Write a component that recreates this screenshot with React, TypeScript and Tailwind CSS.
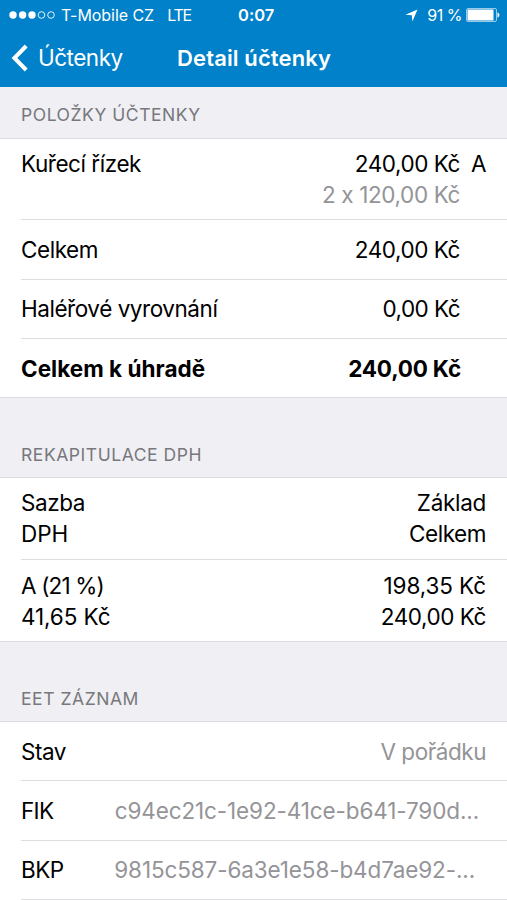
import type { ReactNode } from 'react';

function StatusBar() {
  return (
    <div className="flex h-[30px] items-center text-[16px]">
      <div className="flex w-[238px] items-center pl-[9px]">
        <svg width="46" height="10" viewBox="0 0 46 10" fill="#fff" aria-hidden="true">
          <circle cx="4" cy="5" r="3.7" />
          <circle cx="13.6" cy="5" r="3.7" />
          <circle cx="23" cy="5" r="3.7" />
          <circle cx="32.5" cy="5" r="3.3" fill="none" stroke="#fff" strokeWidth="0.9" />
          <circle cx="42" cy="5" r="3.3" fill="none" stroke="#fff" strokeWidth="0.9" />
        </svg>
        <span className="ml-[6px] tracking-[-0.05px]">T-Mobile CZ</span>
        <span className="ml-[13px] tracking-[-1.2px]">LTE</span>
      </div>
      <span className="text-[16.5px] font-semibold">0:07</span>
      <div className="ml-auto flex items-center pr-[7px]">
        <svg width="13" height="13" viewBox="0 0 13 13" fill="#fff" aria-hidden="true">
          <path d="M12.5 0.5 L7.4 12.4 L6.8 6.3 L0.4 5.7 Z" />
        </svg>
        <span className="ml-[9px] tracking-[-0.5px]">91 %</span>
        <svg className="ml-[4px]" width="34" height="14" viewBox="0 0 34 14" fill="#fff" aria-hidden="true">
          <rect x="0.5" y="0.5" width="30" height="13" rx="1.5" fill="none" stroke="#fff" strokeOpacity="0.6" />
          <rect x="1.5" y="1.5" width="26" height="11" />
          <path d="M31.5 4.5 C34 5 34 9 31.5 9.5 Z" />
        </svg>
      </div>
    </div>
  );
}

function NavBar() {
  return (
    <div className="flex h-[56px] items-center">
      <button className="flex w-[177px] items-center pl-[11px] text-[22.5px] tracking-[-0.5px]">
        <svg width="18" height="28" viewBox="0 0 18 28" fill="none" stroke="#fff" strokeWidth="4" aria-hidden="true">
          <path d="M15.2 2 L3.4 14 L15.2 26" />
        </svg>
        <span className="ml-[9px]">Účtenky</span>
      </button>
      <h1 className="text-[22px] font-semibold tracking-[0.12px]">Detail účtenky</h1>
    </div>
  );
}

function SectionHeader({ className, children }: { className: string; children: ReactNode }) {
  return (
    <h2 className={`flex items-end border-b border-[#dcdce0] pl-[21px] text-[17.5px] leading-[22px] tracking-[0.55px] text-[#77777c] ${className}`}>
      {children}
    </h2>
  );
}

function Row({ className, last, children }: { className: string; last?: boolean; children: ReactNode }) {
  return (
    <div className={last ? 'border-b border-[#dcdce0] pl-[21px]' : 'pl-[21px]'}>
      <div className={`flex justify-between leading-[31px] ${last ? '' : 'border-b border-[#dedee1]'} ${className}`}>
        {children}
      </div>
    </div>
  );
}

export default function App() {
  return (
    <div className="h-[900px] w-[507px] overflow-hidden bg-white font-['Inter',sans-serif] text-[22.5px] tracking-[-0.45px] whitespace-nowrap text-black [font-feature-settings:'calt'_0]">
      <header className="h-[87px] bg-[#0081c9] tracking-normal text-white">
        <StatusBar />
        <NavBar />
      </header>

      <section className="bg-[#efeff4]">
        <SectionHeader className="h-[52px] pb-[12px]">POLOŽKY ÚČTENKY</SectionHeader>
        <div className="bg-white">
          <Row className="h-[81px] pt-[9px] pr-[21px]">
            <span>Kuřecí řízek</span>
            <div className="flex">
              <div className="text-right">
                <div>240,00 Kč</div>
                <div className="tracking-[-0.38px] text-[#949498]">2 x 120,00 Kč</div>
              </div>
              <span className="w-[26px] text-right">A</span>
            </div>
          </Row>
          <Row className="h-[60px] items-center pr-[47px]">
            <span>Celkem</span>
            <span>240,00 Kč</span>
          </Row>
          <Row className="h-[59px] items-center pr-[47px] pb-[2px]">
            <span>Haléřové vyrovnání</span>
            <span className="tracking-[-0.55px]">0,00 Kč</span>
          </Row>
          <Row className="h-[58px] items-center pr-[46px] font-bold" last>
            <span className="tracking-[0.02px]">Celkem k úhradě</span>
            <span className="tracking-[-0.2px]">240,00 Kč</span>
          </Row>
        </div>
      </section>

      <section className="bg-[#efeff4]">
        <SectionHeader className="h-[80px] pb-[11px]">REKAPITULACE DPH</SectionHeader>
        <div className="bg-white">
          <Row className="h-[82px] pt-[9px] pr-[21px]">
            <div>
              <div>Sazba</div>
              <div className="tracking-[-0.1px]">DPH</div>
            </div>
            <div className="text-right">
              <div className="tracking-[-0.3px]">Základ</div>
              <div>Celkem</div>
            </div>
          </Row>
          <Row className="h-[81px] pt-[10px] pr-[21px]" last>
            <div>
              <div className="tracking-[-0.85px]">A (21 %)</div>
              <div className="tracking-[-0.1px]">41,65 Kč</div>
            </div>
            <div className="text-right">
              <div className="tracking-[-0.1px]">198,35 Kč</div>
              <div>240,00 Kč</div>
            </div>
          </Row>
        </div>
      </section>

      <section className="bg-[#efeff4]">
        <SectionHeader className="h-[80px] pb-[11px]">EET ZÁZNAM</SectionHeader>
        <div className="bg-white">
          <Row className="h-[59px] items-center pr-[21px]">
            <span>Stav</span>
            <span className="text-[#949498]">V pořádku</span>
          </Row>
          <Row className="h-[60px] items-center pr-[28px]">
            <span className="tracking-[-0.7px]">FIK</span>
            <span className="tracking-[-0.12px] text-[#949498]">c94ec21c-1e92-41ce-b641-790d...</span>
          </Row>
          <Row className="h-[59px] items-center pr-[32px] pb-[2px] tracking-[-0.12px]">
            <span className="tracking-[-0.5px]">BKP</span>
            <span className="text-[#949498]">9815c587-6a3e1e58-b4d7ae92-...</span>
          </Row>
        </div>
      </section>
    </div>
  );
}
